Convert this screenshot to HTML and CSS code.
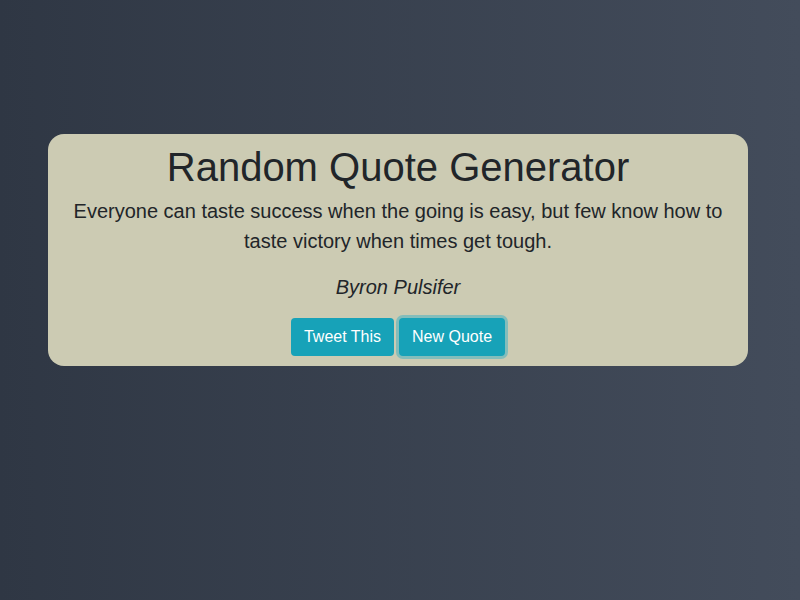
FILE: index.html
```html
<!DOCTYPE html>
<html lang="en">
<head>
<meta charset="utf-8">
<title>Random Quote Generator</title>
<link rel="stylesheet" href="styles.css">
</head>
<body>
<main class="page">
  <section class="card" id="quote-box">
    <h1 class="title">Random Quote Generator</h1>
    <p class="quote" id="text">Everyone can taste success when the going is easy, but few know how to taste victory when times get tough.</p>
    <p class="author" id="author">Byron Pulsifer</p>
    <div class="actions">
      <a class="btn" id="tweet-quote" href="#">Tweet This</a>
      <button class="btn btn-focus" id="new-quote" type="button">New Quote</button>
    </div>
  </section>
</main>
</body>
</html>
```
FILE: styles.css
```css
html, body {
  margin: 0;
  padding: 0;
  height: 100%;
}
body {
  background: linear-gradient(to right, #2f3744 0%, #434c5b 100%);
  font-family: "Liberation Sans", Arial, sans-serif;
  color: #212529;
}
.page {
  padding: 134px 4px 0 0;
  display: flex;
  justify-content: center;
}
.card {
  width: 700px;
  box-sizing: border-box;
  background: #cccbb3;
  border-radius: 16px;
  padding: 9px 16px 10px;
  text-align: center;
}
.title {
  font-size: 40px;
  font-weight: 400;
  line-height: 48px;
  margin: 0 0 5px;
}
.quote {
  font-size: 20px;
  line-height: 30px;
  margin: 0 0 16px;
}
.author {
  font-size: 20px;
  line-height: 30px;
  font-style: italic;
  margin: 0 0 16px;
}
.actions {
  display: flex;
  justify-content: center;
  gap: 4px;
}
.btn {
  display: inline-block;
  font-family: "Liberation Sans", Arial, sans-serif;
  font-size: 16px;
  line-height: 24px;
  padding: 7px 13px;
  color: #fff;
  background: #17a2b8;
  border: 0;
  border-radius: 4px;
  text-decoration: none;
  cursor: pointer;
}
.btn-focus {
  box-shadow: 0 0 0 3px rgba(58, 176, 195, 0.5);
  margin-left: 1px;
}
```
